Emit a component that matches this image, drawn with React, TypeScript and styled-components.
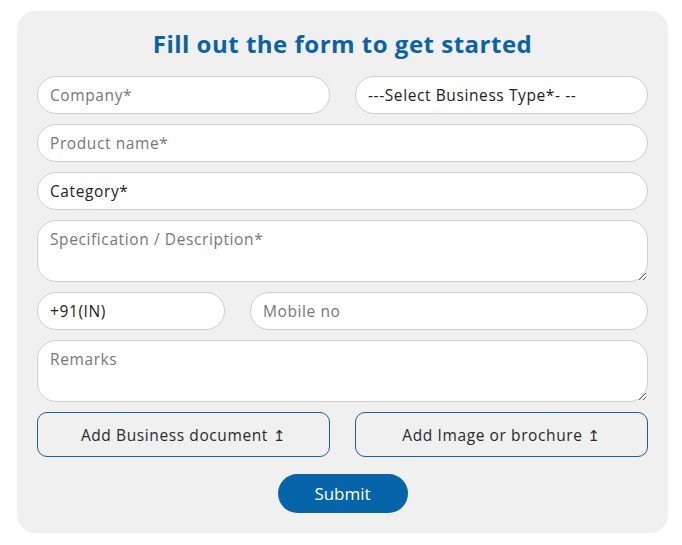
import React from "react";
import styled, { createGlobalStyle, css } from "styled-components";

const Global = createGlobalStyle`
  html, body { margin: 0; padding: 0; background: #ffffff; }
  body { font-family: "Open Sans", "Noto Sans", sans-serif; }
  * { box-sizing: border-box; }
`;

const Page = styled.div`
  padding: 11px 0 12px 17px;
`;

const Card = styled.form`
  width: 651px;
  background: #f0f0f0;
  border-radius: 18px;
  padding: 18px 20px 20px 20px;
  display: flex;
  flex-direction: column;
`;

const Title = styled.h2`
  margin: 0 0 17px 0;
  text-align: center;
  font-family: "Open Sans", sans-serif;
  font-weight: 700;
  font-size: 24px;
  letter-spacing: 0.5px;
  line-height: 30px;
  color: #0b63a5;
`;

const Fields = styled.div`
  display: flex;
  flex-direction: column;
  gap: 10px;
`;

const Row = styled.div<{ $cols: string }>`
  display: grid;
  grid-template-columns: ${(p) => p.$cols};
  gap: 25px;
`;

const fieldBase = css`
  width: 100%;
  height: 38px;
  border: 1px solid #cfcfcf;
  border-radius: 19px;
  background: #ffffff;
  padding: 0 12px;
  font-family: "Open Sans", "Noto Sans", sans-serif;
  font-size: 15.5px;
  letter-spacing: 0.6px;
  color: #222222;
  outline: none;
  &::placeholder { color: #787878; opacity: 1; }
`;

const Input = styled.input`
  ${fieldBase}
`;

const Select = styled.select`
  ${fieldBase}
  appearance: none;
  -webkit-appearance: none;
`;

const TextArea = styled.textarea`
  ${fieldBase}
  height: 62px;
  border-radius: 19px;
  padding: 8px 12px;
  line-height: 20px;
  display: block;
`;

const FileButton = styled.button`
  height: 45px;
  border: 1px solid #1d5f98;
  border-radius: 10px;
  background: transparent;
  font-family: "Open Sans", "Noto Sans", sans-serif;
  font-size: 15.5px;
  letter-spacing: 0.6px;
  color: #2a2a2a;
  cursor: pointer;
`;

const Arrow = styled.span`
  font-family: "DejaVu Sans", sans-serif;
  font-size: 15px;
  margin-left: 5px;
`;

const SubmitWrap = styled.div`
  display: flex;
  justify-content: center;
  margin-top: 17px;
`;

const Submit = styled.button`
  width: 130px;
  height: 39px;
  border: none;
  border-radius: 20px;
  background: #0565a8;
  color: #ffffff;
  font-family: "Open Sans", "Noto Sans", sans-serif;
  font-size: 17px;
  cursor: pointer;
`;

export default function App() {
  return (
    <>
      <Global />
      <Page>
        <Card onSubmit={(e) => e.preventDefault()}>
          <Title>Fill out the form to get started</Title>
          <Fields>
            <Row $cols="1fr 1fr">
              <Input placeholder="Company*" />
              <Select defaultValue="">
                <option value="">---Select Business Type*- --</option>
              </Select>
            </Row>
            <Input placeholder="Product name*" />
            <Select defaultValue="">
              <option value="">Category*</option>
            </Select>
            <TextArea placeholder="Specification / Description*" />
            <Row $cols="188px 1fr">
              <Select defaultValue="+91">
                <option value="+91">+91(IN)</option>
              </Select>
              <Input placeholder="Mobile no" />
            </Row>
            <TextArea placeholder="Remarks" />
            <Row $cols="1fr 1fr">
              <FileButton type="button">
                Add Business document<Arrow>↥</Arrow>
              </FileButton>
              <FileButton type="button">
                Add Image or brochure<Arrow>↥</Arrow>
              </FileButton>
            </Row>
          </Fields>
          <SubmitWrap>
            <Submit type="submit">Submit</Submit>
          </SubmitWrap>
        </Card>
      </Page>
    </>
  );
}
